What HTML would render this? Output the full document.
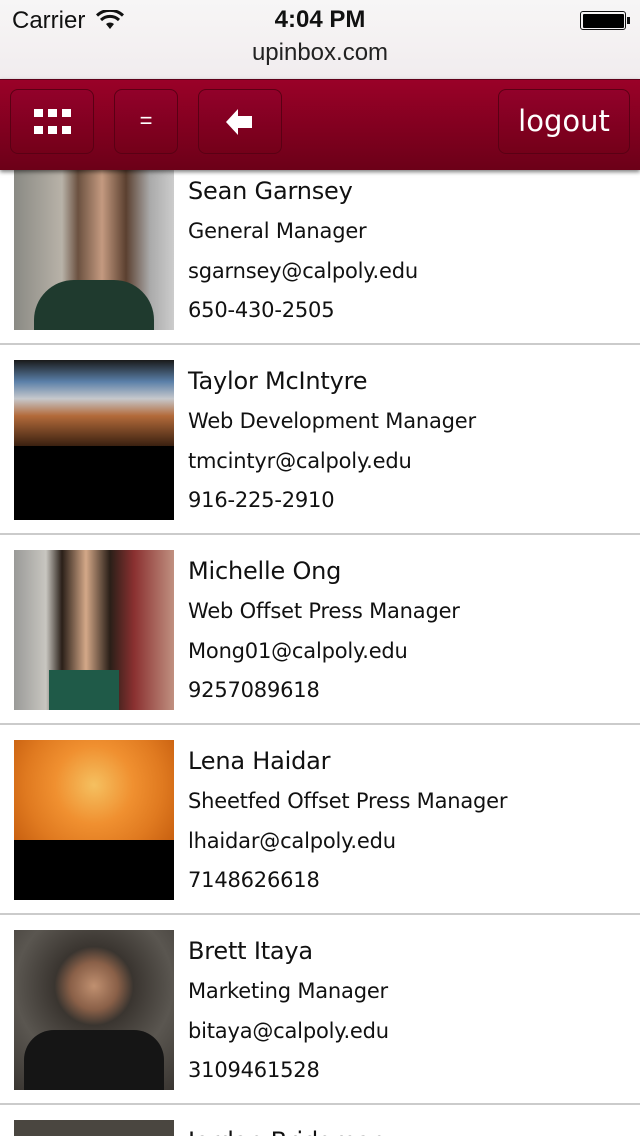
<!DOCTYPE html>
<html style="width:640px;height:1136px;overflow:hidden"><head><meta charset="utf-8"><style>
*{margin:0;padding:0;box-sizing:border-box}
body{width:640px;height:1136px;overflow:hidden;background:#fff;font-family:"Liberation Sans",sans-serif;position:relative}
.top{position:absolute;left:0;top:0;width:640px;height:80px;background:linear-gradient(#f7f6f6,#f1ecee)}
.hdr{position:absolute;left:0;top:79px;width:640px;height:91px;background:linear-gradient(#9a0128,#6c0018);border-top:1px solid #60001a;box-shadow:0 2px 4px rgba(0,0,0,.5);z-index:5}
.btn{position:absolute;top:9px;height:65px;border:1px solid #5a0014;border-radius:8px;background:linear-gradient(#92012a,#740019);color:#fff;text-align:center}
.e{position:absolute;left:0;width:640px;height:190px;border-bottom:2px solid #cbcbcb}
.img{position:absolute;left:14px;top:15px;width:160px;height:160px}
.t{position:absolute;left:188px;color:#111;font-size:21px;line-height:26px;font-family:"DejaVu Sans","Liberation Sans",sans-serif;letter-spacing:-0.2px;white-space:nowrap}
.n{font-size:24px;top:23px}
</style></head><body>
<div class="top">
<div style="position:absolute;left:12px;top:7px;font-size:24px;color:#111">Carrier</div>
<svg style="position:absolute;left:96px;top:10px" width="28" height="20" viewBox="0 0 28 20"><path d="M14 19 L10 14 A6 6 0 0 1 18 14Z" fill="#111"/><path d="M5 10 A13 13 0 0 1 23 10" stroke="#111" stroke-width="3" fill="none"/><path d="M1 5.5 A19 19 0 0 1 27 5.5" stroke="#111" stroke-width="3" fill="none"/></svg>
<div style="position:absolute;left:0;width:640px;top:6px;text-align:center;font-size:24px;font-weight:bold;color:#111">4:04 PM</div>
<div style="position:absolute;left:580px;top:11px;width:46px;height:19px;border:1.5px solid #111;border-radius:3px;padding:1.5px"><div style="background:#000;height:100%;border-radius:1px"></div></div>
<div style="position:absolute;left:627px;top:17px;width:3px;height:7px;background:#111"></div>
<div style="position:absolute;left:0;width:640px;top:39px;text-align:center;font-size:24px;color:#222">upinbox.com</div>
</div>
<div class="hdr">
<div class="btn" style="left:10px;width:84px"><svg width="40" height="30" style="margin-top:17px" viewBox="0 0 40 30"><g fill="#fff"><rect x="2" y="2" width="9" height="8"/><rect x="16" y="2" width="9" height="8"/><rect x="30" y="2" width="9" height="8"/><rect x="2" y="19" width="9" height="8"/><rect x="16" y="19" width="9" height="8"/><rect x="30" y="19" width="9" height="8"/></g></svg></div>
<div class="btn" style="left:114px;width:64px;font-size:22px;line-height:62px">=</div>
<div class="btn" style="left:198px;width:84px"><svg width="30" height="28" style="margin-top:18px" viewBox="0 0 30 28"><path d="M1 14 L13 1 L13 8 L27 8 L27 20 L13 20 L13 27Z" fill="#fff"/></svg></div>
<div class="btn" style="left:498px;width:132px;font-size:29px;line-height:62px;font-family:'DejaVu Sans',sans-serif">logout</div>
</div>

<div class="e" style="top:155px"><div class="img" style="background:linear-gradient(90deg,#8a8a84,#b8b2a8 30%,#6b5140 40%,#c49a80 55%,#5b4030 70%,#aaa 85%,#ccc);"><div style="position:absolute;bottom:0;left:20px;width:120px;height:50px;background:#1f3a2e;border-radius:40px 40px 0 0"></div></div>
<div class="t n">Sean Garnsey</div><div class="t" style="top:63px">General Manager</div><div class="t" style="top:103px">sgarnsey@calpoly.edu</div><div class="t" style="top:142px">650-430-2505</div></div>

<div class="e" style="top:345px"><div class="img" style="background:#000"><div style="height:86px;background:linear-gradient(#1a1a1a,#5a7fa8 25%,#c6c8cc 45%,#b36a3a 65%,#3a2010)"></div></div>
<div class="t n">Taylor McIntyre</div><div class="t" style="top:63px">Web Development Manager</div><div class="t" style="top:103px">tmcintyr@calpoly.edu</div><div class="t" style="top:142px">916-225-2910</div></div>

<div class="e" style="top:535px"><div class="img" style="background:linear-gradient(90deg,#9a9a98,#c8c6c0 20%,#2a1f18 30%,#d4a888 45%,#2a1f18 60%,#8a3030 75%,#c09080)"><div style="position:absolute;bottom:0;left:35px;width:70px;height:40px;background:#1f5a48"></div></div>
<div class="t n">Michelle Ong</div><div class="t" style="top:63px">Web Offset Press Manager</div><div class="t" style="top:103px">Mong01@calpoly.edu</div><div class="t" style="top:142px">9257089618</div></div>

<div class="e" style="top:725px"><div class="img" style="background:#000"><div style="height:100px;background:radial-gradient(circle at 50% 45%,#f5c060,#f09030 40%,#e07a20 70%,#c86010)"></div></div>
<div class="t n">Lena Haidar</div><div class="t" style="top:63px">Sheetfed Offset Press Manager</div><div class="t" style="top:103px">lhaidar@calpoly.edu</div><div class="t" style="top:142px">7148626618</div></div>

<div class="e" style="top:915px"><div class="img" style="background:radial-gradient(circle at 50% 35%,#c09070 0,#8a6048 18%,#3a3530 30%,#5a5650 60%,#3a3632)"><div style="position:absolute;bottom:0;left:10px;width:140px;height:60px;background:#151515;border-radius:30px 30px 0 0"></div></div>
<div class="t n">Brett Itaya</div><div class="t" style="top:63px">Marketing Manager</div><div class="t" style="top:103px">bitaya@calpoly.edu</div><div class="t" style="top:142px">3109461528</div></div>

<div class="e" style="top:1105px;height:31px;border:none;overflow:hidden"><div class="img" style="background:#4a4640"></div>
<div class="t n">Jordan Bridgman</div></div>
</body></html>
